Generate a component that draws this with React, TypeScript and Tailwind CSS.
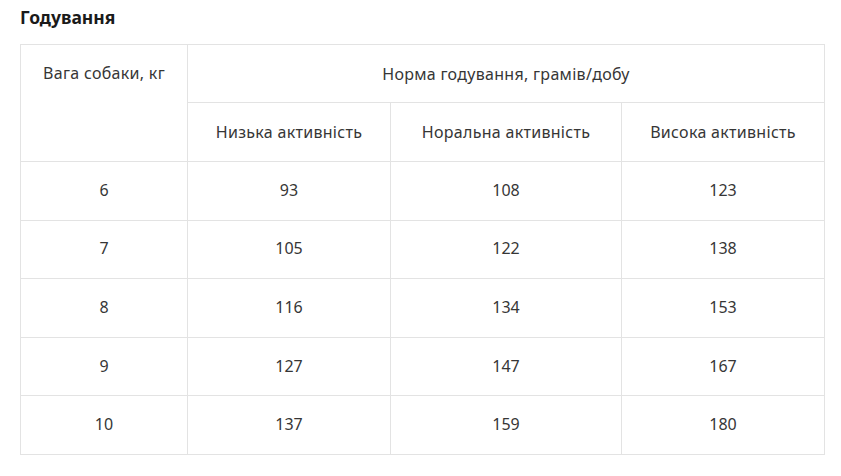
const rows = [
  ["6", "93", "108", "123"],
  ["7", "105", "122", "138"],
  ["8", "116", "134", "153"],
  ["9", "127", "147", "167"],
  ["10", "137", "159", "180"],
];

const cell = "border border-[#e3e3e3] text-center align-middle";
const head = `${cell} font-normal text-[16px] tracking-[0.3px]`;

export default function App() {
  return (
    <div className="min-h-[476px] bg-white px-5 pt-[5px] font-['Noto_Sans',sans-serif] text-[#363636]">
      <h2 className="text-[17.5px] font-bold leading-[24px] text-[#1a1a1a]">Годування</h2>
      <table className="mt-[15px] w-[804px] table-fixed border-collapse text-[16px]">
        <colgroup>
          <col className="w-[167px]" />
          <col className="w-[203px]" />
          <col className="w-[231px]" />
          <col className="w-[203px]" />
        </colgroup>
        <thead>
          <tr className="h-[58px]">
            <th rowSpan={2} className={`${head} align-top pt-[17px] leading-[22px]`}>
              Вага собаки, кг
            </th>
            <th colSpan={3} className={head}>
              Норма годування, грамів/добу
            </th>
          </tr>
          <tr className="h-[59px]">
            <th className={head}>Низька активність</th>
            <th className={head}>Норальна активність</th>
            <th className={head}>Висока активність</th>
          </tr>
        </thead>
        <tbody>
          {rows.map((r) => (
            <tr key={r[0]} className="h-[58.6px]">
              {r.map((v, i) => (
                <td key={i} className={`${cell} pb-[2px]`}>
                  {v}
                </td>
              ))}
            </tr>
          ))}
        </tbody>
      </table>
    </div>
  );
}
